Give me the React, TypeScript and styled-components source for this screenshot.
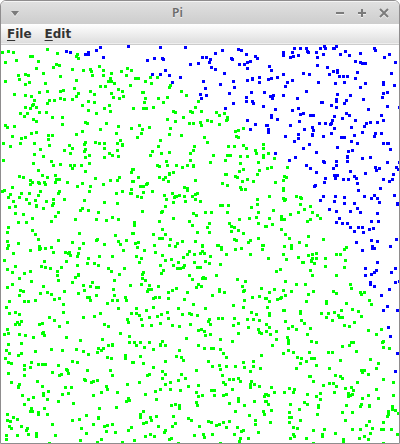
import React from "react";
import styled, { createGlobalStyle } from "styled-components";

const GlobalStyle = createGlobalStyle`
  * { box-sizing: border-box; }
  body { margin: 0; background: #fff; }
`;

const Window = styled.main`
  display: flex;
  flex-direction: column;
  min-height: 100vh;
  border: 1px solid #8f8d8e;
  border-radius: 6px 6px 0 0;
  overflow: hidden;
  background: #fff;
  font-family: "Noto Sans", "Open Sans", sans-serif;
`;

const TitleBar = styled.header`
  display: grid;
  grid-template-columns: 1fr auto 1fr;
  align-items: center;
  height: 23px;
  padding: 0 6px 0 5px;
  border-top: 1px solid #f4f4f4;
  background: linear-gradient(#e0e0e0, #cdcdcd);
`;

const Title = styled.h1`
  margin: 0;
  padding-right: 44px;
  font-size: 12px;
  line-height: 20px;
  font-weight: 600;
  font-family: "Noto Sans", sans-serif;
  color: #6b6b6b;
  text-shadow: 0 1px 0 #eeeeee;
`;

const Controls = styled.div`
  display: flex;
  justify-content: flex-end;
  gap: 4px;
`;

const WindowButton = styled.button`
  display: grid;
  place-items: center;
  width: 18px;
  height: 18px;
  padding: 0;
  border: 0;
  background: none;
  color: #7b7b7b;

  svg {
    filter: drop-shadow(0 1px 0 #f0f0f0);
  }
`;

const MenuBar = styled.nav`
  display: flex;
  gap: 13px;
  height: 21px;
  padding-left: 6px;
  border-bottom: 1px solid #cccccc;
  background: linear-gradient(#ffffff, #dedede 19px, #eeeeee 19px);
`;

const MenuButton = styled.button`
  padding: 0;
  border: 0;
  background: none;
  color: #333333;
  font-family: "DejaVu Sans", sans-serif;
  font-size: 12px;
  font-weight: 700;
  line-height: 20px;

  u {
    text-underline-offset: 2px;
    text-decoration-thickness: 1px;
    text-decoration-skip-ink: none;
  }
`;

const Plot = styled.svg`
  display: block;
  width: 100%;
  height: auto;
  background: #fff;
`;

type Tile = { x: number; y: number; inside: string; outside: string };

// Sample centres are stored in thirds of a unit, relative to each tile's origin.
const SUBUNITS = 3;
const DOT = 3;

const tiles: Tile[] = [
  {
    x: -1,
    y: -5,
    outside: "199,34 211,37 256,43 265,43 265,38 289,31 301,22 310,52 385,19",
    inside: `7,37 25,34 40,37 142,28 172,40 91,49 97,49 49,61 16,67 115,64 232,43 229,49 235,55 169,73 178,76 160,82
      109,85 130,100 181,109 217,88 250,91 271,88 274,94 277,106 298,79 310,91 310,106 334,100 364,94 379,106 382,85 394,91
      55,106 58,118 76,103 85,106 76,133 88,127 16,124 136,130 229,121 331,115 325,124 334,124 343,130 301,139 316,139 391,136
      43,163 76,166 94,169 118,157 142,154 181,154 190,151 223,145 235,160 229,169 217,178 193,178 181,175 271,154 283,163
      334,160 355,148 367,154 340,172 358,175 370,169 103,181 148,181 163,181 142,190 100,193 97,196 91,205 109,202 76,202
      61,220 82,220 73,229 118,217 139,217 265,184 283,187 247,196 265,211 289,220 328,196 313,205 331,214 400,205
      157,232 187,232 187,253 100,238 109,244 16,256 22,262 43,259 256,247 262,250 319,250 301,268 355,259 394,265
      247,274 229,283 109,277 94,280 37,289 64,295 76,292 61,310 10,310 31,319 103,310 145,286 157,286 145,298 148,316
      349,280 361,301 367,313 367,316 352,310 352,331 355,349 256,307 253,313 286,307 298,310 313,310 313,325 313,352
      208,316 217,325 193,331 211,340 256,328 253,334 268,346 256,352 121,328 103,343 130,349 10,361 328,340 337,346
      100,370 115,391 154,364 160,376 181,373 211,376 223,376 217,385 244,376 268,370 256,394 397,388 394,397`,
  },
  {
    x: 132,
    y: -5,
    outside: `82,22 157,22 43,61 64,55 88,55 91,58 172,73 196,70 208,52 220,52 232,58 229,67 235,82 247,88 247,40 268,31
      316,28 325,31 340,43 295,55 298,58 319,73 334,73 343,67 352,64 343,85 367,49 373,55 274,100 97,91 82,103 58,103
      109,106 142,112 118,127 211,124 217,145 202,163 220,166 205,175 262,133 301,124 304,142 289,160 343,121 358,115 358,118
      379,112 379,127 355,157 394,157 340,172 340,184 358,184 361,190 391,199 301,190 277,205 343,241 367,253 352,268 400,256`,
    inside: `7,115 16,115 52,112 73,112 37,124 55,130 112,136 109,142 28,157 31,157 37,175 34,187 76,175 103,172 91,187
      145,154 160,166 196,184 187,202 1,205 31,205 40,205 61,202 121,214 127,217 172,214 178,217 205,214 250,217 274,220
      259,226 283,232 283,238 280,241 103,238 127,244 151,232 169,250 181,250 202,247 205,256 223,241 235,244 259,253
      19,256 28,268 25,280 49,262 112,265 109,283 145,286 13,292 82,301 214,292 223,307 307,274 316,271 331,265 310,289 316,292
      76,319 58,334 52,346 85,340 109,337 184,319 181,331 172,340 172,361 286,319 304,319 331,316 340,325 391,313 391,325
      367,331 370,340 391,346 391,352 241,346 283,346 292,346 322,349 343,349 277,361 232,367 322,370 376,367 100,364
      73,376 79,379 103,376 130,376 148,382 163,376 181,376 181,379 1,388 109,400 121,397 331,388 319,394 379,391 403,385`,
  },
  {
    x: 265,
    y: -5,
    outside: `85,25 103,25 121,25 163,25 175,19 178,25 202,25 205,25 211,19 52,37 52,46 79,37 82,49 73,52 97,46 124,34 127,37
      151,37 154,52 172,43 238,34 223,43 250,46 283,40 325,25 328,31 370,43 355,52 268,64 283,67 289,70 298,70 388,67
      10,79 16,91 154,76 184,82 202,94 214,91 214,97 190,103 52,103 112,100 130,103 7,118 16,115 34,112 79,121 64,127
      58,139 157,127 220,109 232,109 244,109 235,127 208,130 268,115 274,97 298,130 283,142 376,100 352,127 352,133 385,136
      121,154 13,169 22,166 19,175 52,166 94,175 214,163 211,178 211,184 253,166 292,178 352,160 364,157 349,172 241,181
      235,190 166,187 169,187 196,196 211,202 28,208 79,211 97,205 103,223 112,220 16,226 16,232 34,238 133,226 142,226
      100,244 205,229 199,241 196,250 193,253 229,235 241,220 250,226 268,241 307,208 364,199 346,226 352,241 400,202
      73,256 4,256 7,268 7,276 115,268 139,262 142,271 139,283 139,286 160,250 178,250 205,265 196,280 172,289 97,283 97,295
      58,289 85,304 226,292 235,292 256,262 265,286 256,304 274,310 289,277 295,259 301,250 313,247 334,247 328,280 325,289
      346,280 352,310 364,310 367,310 373,328 130,313 112,325 214,322 151,337 28,340 88,352 70,361 247,334 259,331
      244,349 244,352 244,364 289,355 313,352 172,364 175,367 211,364 211,376 202,385 121,376 133,385 151,397 253,394
      298,400 328,382 331,391 340,385 364,367 391,382 397,388 400,367 382,403`,
    inside: "7,340 25,355 4,385 16,382 64,382",
  },
  {
    x: -1,
    y: 129,
    outside: "",
    inside: `58,7 70,10 127,4 142,10 166,4 169,16 178,16 166,25 91,19 97,25 91,31 115,25 118,28 133,25 136,31 202,25
      286,13 247,28 232,37 271,37 268,52 331,19 352,19 358,10 310,31 397,22 37,40 13,49 7,52 31,61 25,70 58,70 64,58
      88,58 121,52 115,64 178,52 175,58 193,76 160,76 160,88 157,94 139,82 79,76 106,79 88,88 40,82 46,97 28,100 109,94
      109,97 130,103 349,58 367,52 394,46 391,58 394,58 313,85 352,88 253,79 247,103 241,109 265,109 295,115 289,136
      319,139 337,130 355,136 226,136 175,115 166,127 154,142 46,118 70,121 97,133 55,145 79,145 25,160 22,175 97,169 106,181
      403,145 403,154 397,178 238,178 115,196 22,202 25,214 22,223 55,208 118,217 121,223 118,226 136,223 154,220 91,229
      40,238 160,235 175,199 217,205 250,208 238,223 235,238 232,247 196,235 205,238 208,235 211,244 289,199 292,196
      313,211 346,184 355,202 361,211 379,199 370,229 298,247 337,247 265,253 262,268 283,268 295,274 13,259 133,262
      199,262 232,274 124,277 136,280 151,283 184,280 46,277 22,286 37,295 73,298 91,292 58,313 172,292 172,304 175,319
      235,301 235,304 226,310 217,325 325,283 334,292 373,283 358,301 343,319 391,334 94,322 37,331 22,340 130,337
      61,349 70,352 58,364 121,358 142,355 154,361 193,352 163,376 178,373 190,391 235,358 250,334 253,349 277,325 271,337
      289,340 295,340 289,364 262,370 268,370 271,379 340,346 343,364 337,379 352,379 376,370 379,379 322,388
      28,382 73,382 85,382 106,379 19,400 355,403`,
  },
  {
    x: 132,
    y: 129,
    outside: "",
    inside: `16,10 1,22 79,10 97,10 91,16 106,22 109,0 187,19 277,1 280,1 307,7 313,10 343,16 328,22 361,22 373,1
      268,28 283,34 322,40 325,46 337,46 43,28 40,31 22,37 31,37 31,55 58,52 13,67 25,70 154,40 163,43 163,49 154,67
      94,64 100,76 118,58 127,67 130,67 139,64 124,70 121,85 97,97 157,82 178,67 187,61 193,58 187,76 202,82
      262,94 268,94 286,94 283,115 355,100 373,76 373,91 376,115 370,130 349,133 376,148 397,157 319,136 28,112 88,112
      85,115 121,133 79,142 181,118 190,124 217,115 235,115 169,142 178,154 229,148 223,160 229,175 193,175 4,145 4,154 1,178
      61,181 97,181 88,166 79,193 88,193 112,196 289,148 295,157 304,160 295,172 316,169 331,178 304,196 310,199 346,205
      352,199 376,193 7,208 16,205 13,220 34,229 64,214 67,235 109,214 127,217 133,208 148,202 187,202 208,214 208,217
      253,214 256,214 265,220 265,226 307,226 325,223 388,214 391,214 388,226 280,241 352,241 169,232 163,241 184,241
      202,238 208,232 214,238 232,247 151,250 10,247 25,253 19,265 88,244 97,259 115,256 136,265 121,274 82,274 217,262
      229,268 184,265 262,271 154,274 151,280 133,283 142,283 193,280 202,280 91,289 85,298 31,295 28,301 28,313 37,319
      25,331 49,334 169,304 178,316 211,310 208,313 217,313 250,304 313,316 337,322 76,337 196,331 190,340 205,337 328,337
      385,343 46,346 55,346 43,352 106,355 118,349 130,343 163,355 259,346 259,352 274,355 334,349 331,352 238,364
      61,373 67,370 79,370 106,373 154,376 181,391 358,370 379,367 397,373 334,379 301,394 331,400 10,403 61,400 136,403 217,403`,
  },
  {
    x: 265,
    y: 129,
    outside: `205,4 214,4 208,7 208,13 178,13 175,25 148,34 145,37 232,16 247,16 265,7 271,13 274,28 277,49 298,-2 382,1
      352,16 370,22 379,16 343,43 172,67 163,79 208,67 205,82 235,70 235,88 295,67 316,73 325,64 334,73 340,85 385,64
      190,106 211,112 265,88 274,103 253,112 283,115 334,118 394,88 394,91 220,133 211,145 229,148 244,148 253,160 265,172
      277,160 289,160 292,175 316,142 337,142 310,166 322,163 316,199 334,202 391,196 271,205 289,229 319,217 319,223
      325,223 373,217 334,265 298,283 298,304 316,301 325,295 331,289 376,295 388,283 388,325 400,322 313,325 313,331
      325,337 370,346 346,364 364,397`,
    inside: `55,7 61,10 52,19 28,25 52,43 52,49 10,67 52,73 55,79 58,76 91,67 103,70 106,73 103,91 22,109 73,121
      97,115 115,106 133,97 139,115 154,124 163,133 124,142 133,136 10,133 46,127 46,136 55,136 1,157 19,151 46,166
      58,181 70,193 127,187 172,196 100,205 55,217 76,214 76,222 121,214 52,241 61,256 7,253 97,250 127,244 139,241
      151,238 139,253 151,253 136,259 136,262 145,268 109,265 112,265 178,253 211,241 223,241 235,226 241,220 238,259 235,280
      178,277 133,289 139,304 211,304 43,286 31,292 58,322 91,331 118,331 253,331 256,343 25,346 10,355 52,349 76,352
      58,364 46,370 43,373 34,376 1,373 10,382 4,400 127,361 142,352 121,382 181,382 181,388 202,352 211,358
      283,355 295,355 286,361 310,379 316,391 241,388`,
  },
  {
    x: -1,
    y: 263,
    outside: "",
    inside: `28,16 46,13 58,19 190,13 148,28 163,37 250,28 283,25 301,16 394,16 382,34 385,43 64,40 52,43 46,49 58,49
      118,49 127,46 178,55 202,43 313,49 325,55 22,64 13,79 25,76 58,79 76,82 127,76 130,73 133,82 100,88 199,88 241,97
      361,76 388,85 388,103 403,103 307,94 325,112 337,109 337,112 25,109 64,106 19,127 28,136 55,142 64,136 106,130
      154,124 187,127 229,124 250,130 265,139 295,121 310,121 304,127 292,133 322,148 334,151 376,142 376,151 397,163
      16,151 25,163 34,166 94,163 91,178 73,172 73,184 73,202 115,169 127,169 136,169 175,172 217,160 232,163 199,184
      202,187 205,196 184,199 178,202 157,193 25,196 262,187 331,187 337,202 34,223 58,229 55,235 55,238 112,220 127,235
      253,214 256,217 274,223 280,220 292,217 196,238 214,238 319,235 322,244 304,253 352,253 382,229 145,250 130,256
      130,262 187,259 205,256 67,262 85,274 100,268 142,274 73,289 175,280 220,286 280,262 385,271 388,277 379,280
      349,298 298,301 94,301 91,310 97,310 115,313 115,319 133,301 142,319 22,319 40,328 22,337 31,340 52,334
      28,355 34,361 64,355 82,361 79,367 85,379 52,382 19,382 19,394 109,376 109,385 166,382 157,349 217,337 238,334
      259,322 295,328 295,331 280,349 244,361 259,376 313,355 322,352 337,349 319,370 346,373 385,367 394,358
      241,397 304,394 292,403 367,403 148,406`,
  },
  {
    x: 132,
    y: 263,
    outside: "",
    inside: `40,7 10,16 19,22 25,34 49,28 73,25 85,19 103,13 106,31 148,19 169,16 175,19 193,22 28,52 55,52 82,46
      118,52 139,55 172,49 229,34 226,40 232,49 256,31 268,31 304,31 316,46 301,52 343,34 361,34 355,13 370,19 379,37
      346,58 376,64 379,73 385,76 400,70 196,67 205,64 214,70 217,82 232,79 160,91 262,94 298,100 316,76 4,103 10,112
      22,103 49,103 34,118 61,124 88,100 82,109 82,112 97,112 139,127 196,112 214,121 235,121 241,121 262,124 271,136
      280,148 385,142 22,145 130,145 145,148 151,157 97,160 1,163 31,166 61,178 226,160 238,175 259,172 262,184 280,175
      307,175 331,163 334,178 361,160 361,175 352,190 382,181 190,187 88,190 97,199 88,211 49,199 43,202 145,199 157,211
      136,217 112,223 97,229 19,223 268,202 289,214 301,214 316,211 322,220 271,223 277,229 355,220 352,229 352,238
      364,229 379,235 82,244 112,244 142,247 166,235 196,232 67,250 37,259 190,253 196,265 208,262 235,247 244,247
      244,262 271,262 280,259 298,244 397,259 394,265 397,280 364,280 316,271 316,280 70,274 115,292 127,289 139,292
      139,301 190,283 193,292 289,286 334,292 31,310 22,319 22,328 52,328 55,337 70,325 121,325 40,343 31,346 127,346
      118,355 76,355 166,331 175,337 199,355 307,310 349,322 391,310 394,319 367,337 367,349 226,340 235,343 250,352
      259,349 271,343 289,340 280,358 313,358 97,367 94,373 52,379 37,385 64,385 4,397 115,391 109,394 184,382
      211,379 214,388 238,379 304,379 331,367 325,370 376,373 322,391 346,391 319,400 136,406 262,406`,
  },
  {
    x: 265,
    y: 263,
    outside: "352,7 394,7 367,58 373,85 394,136 388,190",
    inside: `52,7 55,7 10,16 10,22 103,10 103,16 58,40 106,37 115,46 1,49 10,58 79,55 67,61 91,64 133,61 1,70 31,70
      13,79 124,79 31,94 64,88 67,97 67,106 19,112 166,16 187,16 205,13 226,7 181,28 199,37 217,22 220,28 229,28
      259,4 277,10 286,25 265,43 235,52 250,55 307,67 346,64 331,79 136,100 151,103 67,127 82,133 52,136 130,133
      187,133 199,133 229,115 250,112 256,103 262,103 271,130 352,100 349,103 352,118 370,121 94,148 106,151 121,160
      136,151 145,151 103,166 91,181 151,172 190,181 223,157 313,154 337,166 331,181 286,187 295,187 289,193 307,199
      130,205 133,205 142,220 208,202 223,205 229,211 274,223 352,214 382,223 190,226 202,226 211,235 172,232 238,241
      256,238 262,247 205,253 16,238 70,241 85,244 82,253 55,253 25,253 1,259 7,262 124,259 163,256 151,265 163,274
      247,256 247,265 253,262 259,259 289,271 307,262 331,244 337,271 382,262 1,280 7,289 73,289 115,283 124,289
      157,292 157,298 241,292 286,289 283,295 310,292 310,295 379,295 379,304 388,307 16,307 100,304 70,313 154,319
      229,313 259,313 367,310 367,319 364,325 397,316 70,328 76,328 103,337 13,343 70,343 238,337 310,340 301,352 352,343
      82,358 94,361 142,367 175,364 259,364 283,364 319,361 346,364 352,364 376,364 208,376 313,376 82,379 85,385
      169,379 169,385 73,391 121,391 394,379 295,385 280,391 307,394 232,394 232,402 142,406 352,406`,
  },
];

const toPath = (tile: Tile, samples: string) =>
  samples
    .trim()
    .split(/\s+/)
    .filter(Boolean)
    .map((sample) => {
      const [cx, cy] = sample.split(",").map(Number);
      const x = tile.x + Math.round((cx - 4) / SUBUNITS);
      const y = tile.y + Math.round((cy - 4) / SUBUNITS);
      return `M${x} ${y}h${DOT}v${DOT}h-${DOT}z`;
    })
    .join("");

const insidePath = tiles.map((tile) => toPath(tile, tile.inside)).join("");
const outsidePath = tiles.map((tile) => toPath(tile, tile.outside)).join("");

const Icon = ({ d, filled }: { d: string; filled?: boolean }) => (
  <svg
    width="12"
    height="12"
    viewBox="0 0 12 12"
    fill={filled ? "currentColor" : "none"}
    stroke={filled ? "none" : "currentColor"}
    strokeWidth="2"
    aria-hidden="true"
  >
    <path d={d} />
  </svg>
);

export default function App() {
  return (
    <>
      <GlobalStyle />
      <Window>
        <TitleBar>
          <WindowButton type="button" aria-label="Window menu">
            <Icon d="M2 4h8L6 9z" filled />
          </WindowButton>
          <Title>Pi</Title>
          <Controls>
            <WindowButton type="button" aria-label="Minimize">
              <Icon d="M2 6h8" />
            </WindowButton>
            <WindowButton type="button" aria-label="Maximize">
              <Icon d="M2 6h8M6 2v8" />
            </WindowButton>
            <WindowButton type="button" aria-label="Close">
              <Icon d="M2 2l8 8M10 2l-8 8" />
            </WindowButton>
          </Controls>
        </TitleBar>
        <MenuBar>
          <MenuButton type="button" accessKey="f">
            <u>F</u>ile
          </MenuButton>
          <MenuButton type="button" accessKey="e">
            <u>E</u>dit
          </MenuButton>
        </MenuBar>
        <Plot viewBox="0 0 398 398" shapeRendering="crispEdges" role="img" aria-label="Random samples in a quarter circle">
          <path d={insidePath} fill="#00ff00" />
          <path d={outsidePath} fill="#0000ff" />
        </Plot>
      </Window>
    </>
  );
}
